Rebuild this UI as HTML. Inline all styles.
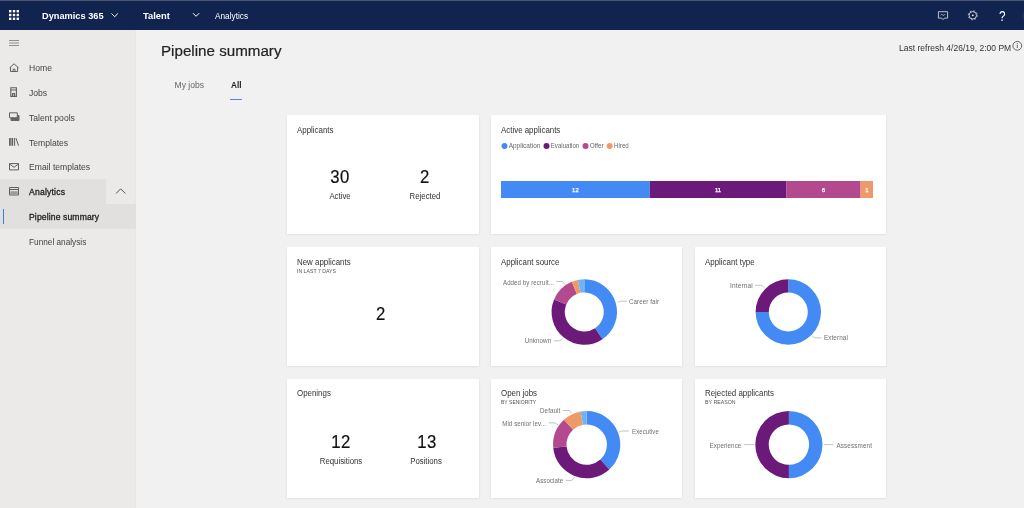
<!DOCTYPE html>
<html lang="en">
<head>
<meta charset="utf-8">
<title>Pipeline summary</title>
<style>
*{box-sizing:border-box;margin:0;padding:0}
html,body{width:1024px;height:508px;overflow:hidden;background:#f1f1f1;font-family:"Liberation Sans",sans-serif;color:#333}
.abs,.t{position:absolute}
.t{white-space:nowrap;line-height:1;transform-origin:0 0}
#top,#side,#main{will-change:transform}
#main{position:absolute;left:0;top:0;width:1024px;height:508px}
#top{position:absolute;left:0;top:0;width:1024px;height:30px;background:#10244f;border-top:1px solid #4a5570}
#top .t{color:#fff}
#side{position:absolute;left:0;top:30px;width:136px;height:478px;background:#ebeae9;box-shadow:inset -1px 0 0 #e7e6e5}
#side .t{color:#444;font-size:8.6px}
#side .sb{color:#222;-webkit-text-stroke:.3px #222}
.card{position:absolute;background:#fff;box-shadow:0 1.4px 2.2px rgba(0,0,0,.115);width:191.3px;height:119.4px}
.card .ttl{position:absolute;left:9.7px;top:10.8px;font-size:8.6px;color:#333;white-space:nowrap;line-height:1;transform-origin:0 0;transform:scaleX(.92)}
.card .sub{position:absolute;left:10px;top:21.8px;font-size:5.6px;color:#555;white-space:nowrap;line-height:1;transform-origin:0 0;transform:scaleX(.9)}
.num{position:absolute;font-size:19px;color:#111;white-space:nowrap;line-height:1;text-align:center;letter-spacing:.6px;-webkit-text-stroke:.2px #111;transform:translateX(-50%) scaleX(.88)}
.lbl{position:absolute;font-size:8.3px;color:#333;white-space:nowrap;line-height:1;transform:translateX(-50%) scaleX(.94)}
svg{position:absolute;left:0;top:0;overflow:visible}
svg text{font-family:"Liberation Sans",sans-serif}
</style>
</head>
<body>
<div id="top">
  <svg width="1024" height="30" viewBox="0 0 1024 30">
    <g fill="#fff">
      <rect x="9" y="9" width="2.4" height="2.4"/><rect x="12.8" y="9" width="2.4" height="2.4"/><rect x="16.6" y="9" width="2.4" height="2.4"/>
      <rect x="9" y="12.8" width="2.4" height="2.4"/><rect x="12.8" y="12.8" width="2.4" height="2.4"/><rect x="16.6" y="12.8" width="2.4" height="2.4"/>
      <rect x="9" y="16.6" width="2.4" height="2.4"/><rect x="12.8" y="16.6" width="2.4" height="2.4"/><rect x="16.6" y="16.6" width="2.4" height="2.4"/>
    </g>
    <g fill="none" stroke="#fff" stroke-width="1">
      <path d="M111.5 12.5 l3.2 3.2 l3.2 -3.2"/>
      <path d="M193 12.2 l3.1 3.1 l3.1 -3.1"/>
      <path d="M938.4 10.7 h9.2 v6.4 h-3.2 l-1.4 1.5 l-1.4 -1.5 h-3.2 z" stroke="#d4d4d4" stroke-width=".9"/>
      <path d="M940.6 14.3 q1.1 -1.8 2.2 -.3 q1 1.2 2.2 -.9" stroke="#c4c8d4" stroke-width=".8"/>
      <circle cx="972.8" cy="14.3" r="3.7" stroke="#d8d8d8" stroke-width=".9"/>
      <circle cx="972.8" cy="14.3" r="4.5" stroke="#d0d0d0" stroke-width=".9" stroke-dasharray="1.6 1.93"/>
      <circle cx="972.8" cy="14.3" r=".9" fill="#fff" stroke="none"/>
    </g>
  </svg>
  <div class="t" style="left:41.5px;top:9.6px;font-size:9.9px;font-weight:bold;transform:scaleX(.935)">Dynamics 365</div>
  <div class="t" style="left:143px;top:9.6px;font-size:9.9px;font-weight:bold;transform:scaleX(.95)">Talent</div>
  <div class="t" style="left:214.5px;top:10.6px;font-size:9.2px;transform:scaleX(.9)">Analytics</div>
  <div class="t" style="left:998.9px;top:7.5px;font-size:14px;transform:scaleX(.84)">?</div>
  <div class="abs" style="left:1021.6px;top:9px;width:12px;height:12px;border-radius:6px;background:#1b2e5e"></div>
</div>
<div id="side">
  <div class="abs" style="left:0;top:149px;width:106px;height:25px;background:#e1e0df"></div>
  <div class="abs" style="left:0;top:174px;width:136px;height:25px;background:#e1e0df"></div>
  <div class="abs" style="left:2.7px;top:179px;width:1.5px;height:15px;background:#3b7af0"></div>
  <svg width="136" height="478" viewBox="0 30 136 478">
    <g fill="none" stroke="#606060" stroke-width="1">
      <path d="M9 40.5 h10 M9 43 h10 M9 45.5 h10" stroke="#777" stroke-width=".8"/>
      <path d="M9.6 67.8 l4.45 -4 l4.45 4 M10.5 67.2 v4.3 h7.1 v-4.3 M13.1 71.5 v-2.3 h1.9 v2.3"/>
      <path d="M10.8 87.8 h5.6 v8.6 h-5.6 z M10.8 90 h5.6 M12.6 96.4 v-2.8 h2 v2.8" stroke-width="1.1"/>
      <path d="M11 115.5 h8 v5 h-8 z" fill="#666" stroke="#666"/>
      <path d="M9.5 112.8 h7.8 v5 h-7.8 z" fill="#ebeae9"/>
      <path d="M9.9 138 v7.8 M12.3 138 v7.8" stroke-width="1.7"/>
      <path d="M14.6 138 v7.8 M16 138.2 l2.5 7.5" stroke-width="1"/>
      <path d="M9.5 163.6 h9 v6.3 h-9 z M9.5 164 l4.5 3.3 l4.5 -3.3"/>
      <path d="M9.5 187.5 h9 v7.5 h-9 z M9.5 189.5 h9"/>
      <path d="M10.3 191.2 h7.4 v3.3 h-7.4 z" fill="#999" stroke="none"/>
      <path d="M116 193.5 l4.7 -4.7 l4.7 4.7" stroke="#555" stroke-width="1"/>
    </g>
  </svg>
  <div class="t" style="left:29px;top:33.7px">Home</div>
  <div class="t" style="left:29px;top:58.6px">Jobs</div>
  <div class="t" style="left:29px;top:83.5px">Talent pools</div>
  <div class="t" style="left:29px;top:108.8px">Templates</div>
  <div class="t" style="left:29px;top:133.1px">Email templates</div>
  <div class="t sb" style="left:29px;top:158px;letter-spacing:.2px">Analytics</div>
  <div class="t sb" style="left:29px;top:183px;letter-spacing:.12px">Pipeline summary</div>
  <div class="t" style="left:29px;top:207.9px;transform:scaleX(.96)">Funnel analysis</div>
</div>
<div id="main">
  <div class="t" style="left:161.3px;top:43px;font-size:15.4px;color:#222;-webkit-text-stroke:.2px #222;transform:scaleX(.985)">Pipeline summary</div>
  <div class="t" style="left:174.5px;top:80.5px;font-size:8.6px;color:#666">My jobs</div>
  <div class="t" style="left:230.5px;top:80.5px;font-size:8.6px;color:#222;font-weight:bold;transform:scaleX(.95)">All</div>
  <div class="abs" style="left:230px;top:98.5px;width:11.5px;height:1px;background:#4f8af2"></div>
  <div class="t" style="left:898.5px;top:43.5px;font-size:8.85px;color:#333;transform:scaleX(.963)">Last refresh 4/26/19, 2:00 PM</div>
  <svg width="1024" height="508" viewBox="0 0 1024 508" style="pointer-events:none">
    <circle cx="1017.3" cy="45.8" r="4.4" fill="none" stroke="#444" stroke-width=".8"/>
    <path d="M1017.3 44.8 v3.2 M1017.3 43.2 v.9" stroke="#444" stroke-width=".8" fill="none"/>
  </svg>

  <div class="card" style="left:287px;top:115px;width:191.9px">
    <div class="ttl">Applicants</div>
    <div class="num" style="left:53px;top:52px">30</div>
    <div class="lbl" style="left:53px;top:77px">Active</div>
    <div class="num" style="left:138px;top:52px">2</div>
    <div class="lbl" style="left:138px;top:77px">Rejected</div>
  </div>
  <div class="card" style="left:491px;top:115px;width:395.1px">
    <div class="ttl" style="left:10.3px">Active applicants</div>
  </div>
  <div class="card" style="left:287px;top:246.9px;width:191.9px">
    <div class="ttl">New applicants</div>
    <div class="sub" style="transform:scaleX(.925)">IN LAST 7 DAYS</div>
    <div class="num" style="left:94px;top:57px">2</div>
  </div>
  <div class="card" style="left:491px;top:246.9px;width:191px">
    <div class="ttl" style="left:10.3px">Applicant source</div>
  </div>
  <div class="card" style="left:694.8px;top:246.9px">
    <div class="ttl" style="left:10.4px">Applicant type</div>
  </div>
  <div class="card" style="left:287px;top:378.7px;width:191.9px">
    <div class="ttl" style="top:10.4px">Openings</div>
    <div class="num" style="left:54.2px;top:53px">12</div>
    <div class="lbl" style="left:53.6px;top:78px">Requisitions</div>
    <div class="num" style="left:139.5px;top:53px">13</div>
    <div class="lbl" style="left:138.6px;top:78px">Positions</div>
  </div>
  <div class="card" style="left:491px;top:378.7px;width:191px">
    <div class="ttl" style="left:10.3px;top:10.4px">Open jobs</div>
    <div class="sub" style="left:10.4px">BY SENIORITY</div>
  </div>
  <div class="card" style="left:694.8px;top:378.7px">
    <div class="ttl" style="left:10.4px;top:10.4px">Rejected applicants</div>
    <div class="sub" style="left:10.4px;transform:scaleX(.94)">BY REASON</div>
  </div>
  <svg id="charts" width="1024" height="508" viewBox="0 0 1024 508">
<rect x="501.00" y="181" width="148.80" height="17" fill="#448af5"/>
<text x="575.40" y="192" font-size="6" fill="#fff" stroke="#fff" stroke-width=".25" text-anchor="middle">12</text>
<rect x="649.80" y="181" width="136.40" height="17" fill="#6b1a7a"/>
<text x="718.00" y="192" font-size="6" fill="#fff" stroke="#fff" stroke-width=".25" text-anchor="middle">11</text>
<rect x="786.20" y="181" width="74.40" height="17" fill="#b34a8f"/>
<text x="823.40" y="192" font-size="6" fill="#fff" stroke="#fff" stroke-width=".25" text-anchor="middle">6</text>
<rect x="860.60" y="181" width="12.40" height="17" fill="#ee9a68"/>
<text x="866.80" y="192" font-size="6" fill="#fff" stroke="#fff" stroke-width=".25" text-anchor="middle">1</text>
<circle cx="504.5" cy="146.1" r="3" fill="#448af5"/>
<text transform="translate(508.7,148.4) scale(0.982,1)" font-size="6.6" fill="#666">Application</text>
<circle cx="546.5" cy="146.1" r="3" fill="#6b1a7a"/>
<text transform="translate(550.8,148.4) scale(0.925,1)" font-size="6.6" fill="#666">Evaluation</text>
<circle cx="585.5" cy="146.1" r="3" fill="#b34a8f"/>
<text transform="translate(589.7,148.4) scale(0.962,1)" font-size="6.6" fill="#666">Offer</text>
<circle cx="609.7" cy="146.1" r="3" fill="#ee9a68"/>
<text transform="translate(614,148.4) scale(0.938,1)" font-size="6.6" fill="#666">Hired</text>
<path d="M584.30 279.30 A32.7 32.7 0 0 1 602.47 339.19 L595.13 328.21 A19.5 19.5 0 0 0 584.30 292.50 Z" fill="#448af5"/>
<path d="M602.47 339.19 A32.7 32.7 0 0 1 554.09 299.49 L566.28 304.54 A19.5 19.5 0 0 0 595.13 328.21 Z" fill="#6b1a7a"/>
<path d="M554.09 299.49 A32.7 32.7 0 0 1 571.79 281.79 L576.84 293.98 A19.5 19.5 0 0 0 566.28 304.54 Z" fill="#b34a8f"/>
<path d="M571.79 281.79 A32.7 32.7 0 0 1 577.92 279.93 L580.50 292.87 A19.5 19.5 0 0 0 576.84 293.98 Z" fill="#ee9a68"/>
<path d="M577.92 279.93 A32.7 32.7 0 0 1 584.30 279.30 L584.30 292.50 A19.5 19.5 0 0 0 580.50 292.87 Z" fill="#6db3f7"/>
<path d="M788.30 279.30 A32.7 32.7 0 1 1 755.60 312.00 L768.80 312.00 A19.5 19.5 0 1 0 788.30 292.50 Z" fill="#448af5"/>
<path d="M755.60 312.00 A32.7 32.7 0 0 1 788.30 279.30 L788.30 292.50 A19.5 19.5 0 0 0 768.80 312.00 Z" fill="#6b1a7a"/>
<path d="M586.70 411.00 A33.6 33.6 0 0 1 609.34 469.43 L600.31 459.53 A20.2 20.2 0 0 0 586.70 424.40 Z" fill="#448af5"/>
<path d="M609.34 469.43 A33.6 33.6 0 0 1 553.24 447.70 L566.59 446.46 A20.2 20.2 0 0 0 600.31 459.53 Z" fill="#6b1a7a"/>
<path d="M553.24 447.70 A33.6 33.6 0 0 1 564.06 419.77 L573.09 429.67 A20.2 20.2 0 0 0 566.59 446.46 Z" fill="#b34a8f"/>
<path d="M564.06 419.77 A33.6 33.6 0 0 1 580.53 411.57 L582.99 424.74 A20.2 20.2 0 0 0 573.09 429.67 Z" fill="#ee9a68"/>
<path d="M580.53 411.57 A33.6 33.6 0 0 1 586.70 411.00 L586.70 424.40 A20.2 20.2 0 0 0 582.99 424.74 Z" fill="#6db3f7"/>
<path d="M788.90 411.00 A33.6 33.6 0 0 1 788.90 478.20 L788.90 464.80 A20.2 20.2 0 0 0 788.90 424.40 Z" fill="#448af5"/>
<path d="M788.90 478.20 A33.6 33.6 0 0 1 788.90 411.00 L788.90 424.40 A20.2 20.2 0 0 0 788.90 464.80 Z" fill="#6b1a7a"/>
<text transform="translate(629.00,303.8) scale(0.899,1)" font-size="6.9" fill="#6f6f6f" text-anchor="start" letter-spacing=".1">Career fair</text><path d="M618 302.2 l2.6 -1 h6.4" fill="none" stroke="#b4b4b4" stroke-width=".8"/>
<text transform="translate(551.20,343.1) scale(0.903,1)" font-size="6.9" fill="#6f6f6f" text-anchor="end" letter-spacing=".1">Unknown</text><path d="M554 340.8 h5.5 l3 -2" fill="none" stroke="#b4b4b4" stroke-width=".8"/>
<text transform="translate(554.00,284.6) scale(0.881,1)" font-size="6.9" fill="#6f6f6f" text-anchor="end" letter-spacing=".1">Added by recruit...</text><path d="M556.3 281.5 h6 l2.5 3" fill="none" stroke="#b4b4b4" stroke-width=".8"/>
<text transform="translate(752.70,288.2) scale(0.953,1)" font-size="6.9" fill="#6f6f6f" text-anchor="end" letter-spacing=".1">Internal</text><path d="M755 285.3 h6.6 l2.9 2.4" fill="none" stroke="#b4b4b4" stroke-width=".8"/>
<text transform="translate(823.90,340.4) scale(0.923,1)" font-size="6.9" fill="#6f6f6f" text-anchor="start" letter-spacing=".1">External</text><path d="M812.1 335.8 l2.4 2 h7" fill="none" stroke="#b4b4b4" stroke-width=".8"/>
<text transform="translate(632.10,433.8) scale(0.870,1)" font-size="6.9" fill="#6f6f6f" text-anchor="start" letter-spacing=".1">Executive</text><path d="M618.9 432.2 l2.6 -1.2 h7.3" fill="none" stroke="#b4b4b4" stroke-width=".8"/>
<text transform="translate(560.30,413.2) scale(0.900,1)" font-size="6.9" fill="#6f6f6f" text-anchor="end" letter-spacing=".1">Default</text><path d="M562.8 410.5 h6.9 l1.6 2.5" fill="none" stroke="#b4b4b4" stroke-width=".8"/>
<text transform="translate(546.10,426) scale(0.887,1)" font-size="6.9" fill="#6f6f6f" text-anchor="end" letter-spacing=".1">Mid senior lev...</text><path d="M548.7 422.9 h6.3 l2.9 2" fill="none" stroke="#b4b4b4" stroke-width=".8"/>
<text transform="translate(563.20,483.2) scale(0.886,1)" font-size="6.9" fill="#6f6f6f" text-anchor="end" letter-spacing=".1">Associate</text><path d="M565.8 480.4 h6 l2.5 -3" fill="none" stroke="#b4b4b4" stroke-width=".8"/>
<text transform="translate(741.40,448) scale(0.901,1)" font-size="6.9" fill="#6f6f6f" text-anchor="end" letter-spacing=".1">Experience</text><path d="M744.2 444.6 h9.8" fill="none" stroke="#b4b4b4" stroke-width=".8"/>
<text transform="translate(836.50,448) scale(0.923,1)" font-size="6.9" fill="#6f6f6f" text-anchor="start" letter-spacing=".1">Assessment</text><path d="M823.9 444.6 h9.5" fill="none" stroke="#b4b4b4" stroke-width=".8"/>
</svg>
</div>
</body>
</html>
